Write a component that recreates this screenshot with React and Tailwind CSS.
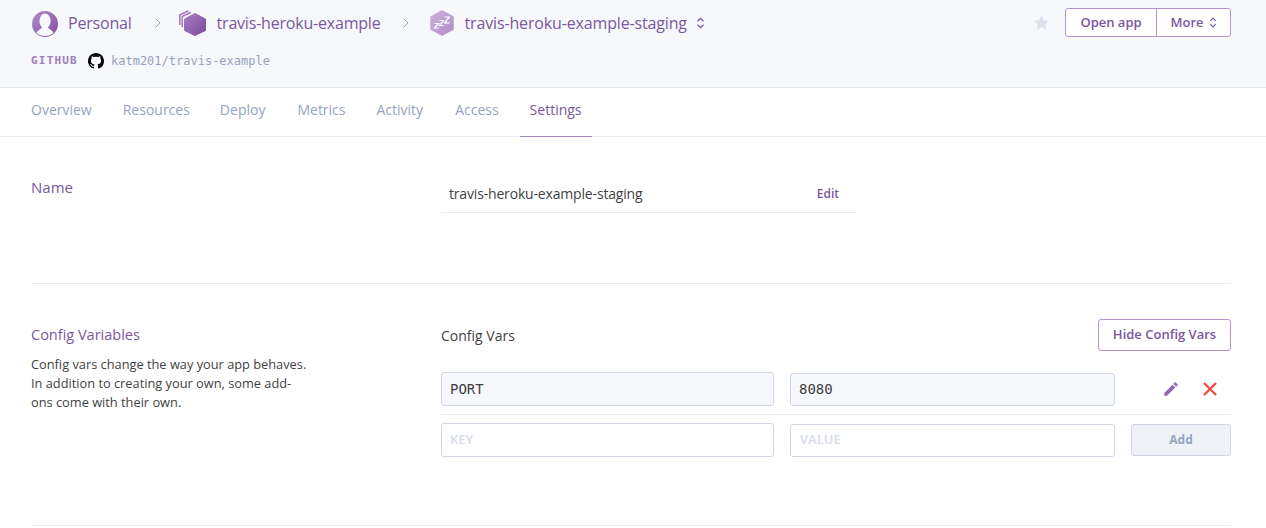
import React from "react";
import { ChevronRight } from "lucide-react";

const sans = "font-['Open_Sans','Noto_Sans',sans-serif]";
const mono = "font-['DejaVu_Sans_Mono',monospace]";

const tabs = [
  { label: "Overview", cls: "mr-[31px]" },
  { label: "Resources", cls: "mr-[30px]" },
  { label: "Deploy", cls: "mr-[32px]" },
  { label: "Metrics", cls: "mr-[31px]" },
  { label: "Activity", cls: "mr-[32px]" },
  { label: "Access", cls: "mr-[21px]" },
];

const UpDown = ({ className }) => (
  <svg viewBox="0 0 10 14" className={className} fill="none" stroke="currentColor" strokeWidth="1.5">
    <path d="M1.5 5 L5 1.5 L8.5 5" />
    <path d="M1.5 9 L5 12.5 L8.5 9" />
  </svg>
);

const PersonIcon = () => (
  <svg viewBox="0 0 26 26" className="w-[26px] h-[26px]">
    <defs>
      <linearGradient id="pg" x1="0" y1="0" x2="1" y2="1">
        <stop offset="0" stopColor="#b48dcc" />
        <stop offset="1" stopColor="#7f4f9f" />
      </linearGradient>
    </defs>
    <circle cx="13" cy="13" r="13" fill="url(#pg)" />
    <g fill="#f7f8fb">
      <ellipse cx="13" cy="10" rx="5.6" ry="7.4" />
      <path d="M4.5 22 C5.5 19 9 18.5 10.5 16 h5 C17 18.5 20.5 19 21.5 22 C19.5 24 16.5 25 13 25 C9.5 25 6.5 24 4.5 22 Z" />
    </g>
  </svg>
);

const AppIcon = () => (
  <svg viewBox="0 0 28 26" className="w-[28px] h-[26px]">
    <defs>
      <linearGradient id="ag" x1="0" y1="0" x2="1" y2="1">
        <stop offset="0" stopColor="#a97fc4" />
        <stop offset="1" stopColor="#7a4a9a" />
      </linearGradient>
    </defs>
    <g fill="none" stroke="#a77dc3" strokeWidth="1.6" strokeLinejoin="round">
      <path d="M0.8 15 V5 L9.5 0.8" />
      <path d="M3.2 17 V6.5 L12 2.2" />
    </g>
    <path d="M16 3.5 L26.5 9 V20.5 L16 25.5 L5.5 20.5 V9 Z" fill="url(#ag)" stroke="url(#ag)" strokeLinejoin="round" />
  </svg>
);

const SleepIcon = () => (
  <svg viewBox="0 0 24 26" className="w-[24px] h-[26px]">
    <defs>
      <linearGradient id="sg" x1="0" y1="0" x2="1" y2="1">
        <stop offset="0" stopColor="#cbb0dc" />
        <stop offset="1" stopColor="#b08dc9" />
      </linearGradient>
    </defs>
    <path d="M12 1 L23 6.9 V19.1 L12 25 L1 19.1 V6.9 Z" fill="url(#sg)" stroke="url(#sg)" strokeWidth="1.5" strokeLinejoin="round" />
    <g fill="none" stroke="#fff" strokeWidth="1.2">
      <path d="M4.5 13.5 h4 L4.5 18 h4.2" />
      <path d="M9.5 10.5 h4 L9.5 15.5 h4.2" />
      <path d="M14.5 7 h5 L14.5 12.8 h5.2" />
    </g>
  </svg>
);

const GithubIcon = () => (
  <svg viewBox="0 0 16 16" className="w-4 h-4" fill="#000">
    <path d="M8 0C3.58 0 0 3.58 0 8c0 3.54 2.29 6.53 5.47 7.59.4.07.55-.17.55-.38 0-.19-.01-.82-.01-1.49-2.01.37-2.53-.49-2.69-.94-.09-.23-.48-.94-.82-1.13-.28-.15-.68-.52-.01-.53.63-.01 1.08.58 1.23.82.72 1.21 1.87.87 2.33.66.07-.52.28-.87.51-1.07-1.78-.2-3.64-.89-3.64-3.95 0-.87.31-1.59.82-2.15-.08-.2-.36-1.02.08-2.12 0 0 .67-.21 2.2.82.64-.18 1.32-.27 2-.27s1.36.09 2 .27c1.53-1.04 2.2-.82 2.2-.82.44 1.1.16 1.92.08 2.12.51.56.82 1.27.82 2.15 0 3.07-1.87 3.75-3.65 3.95.29.25.54.73.54 1.48 0 1.07-.01 1.93-.01 2.2 0 .21.15.46.55.38A8.01 8.01 0 0 0 16 8c0-4.42-3.58-8-8-8z" />
  </svg>
);

const App = () => {
  return (
    <div className={`${sans} w-[1266px] h-[528px] overflow-hidden bg-white`}>
      {/* Header */}
      <div className="bg-[#f7f8fb] h-[88px] border-b border-[#e7eaf1] pl-[31px] pr-[35px] pt-[8px]">
        <div className="flex items-center h-[29px]">
          <div className="ml-[1px] mt-[3px]"><PersonIcon /></div>
          <span className="ml-[10px] text-[16px] tracking-[-0.2px] text-[#79589f]">Personal</span>
          <ChevronRight className="ml-[18px] w-4 h-4 text-[#96a3bf]" strokeWidth={1.5} />
          <div className="ml-[13px]"><AppIcon /></div>
          <span className="ml-[10px] text-[16px] tracking-[-0.2px] text-[#79589f]">travis-heroku-example</span>
          <ChevronRight className="ml-[17px] w-4 h-4 text-[#96a3bf]" strokeWidth={1.5} />
          <div className="ml-[16px]"><SleepIcon /></div>
          <span className="ml-[11px] text-[16px] tracking-[-0.15px] text-[#79589f]">travis-heroku-example-staging</span>
          <UpDown className="ml-[9px] w-[9px] h-[12px] text-[#79589f]" />
          <svg viewBox="0 0 24 24" className="ml-auto w-[17px] h-[17px]" fill="#dfe3ee">
            <path d="M12 1.5l3.2 7.3 7.8.7-5.9 5.2 1.8 7.8L12 18.3l-6.9 4.2 1.8-7.8L1 9.5l7.8-.7z" />
          </svg>
          <div className="ml-[15px] flex h-[29px] bg-white border border-[#b892cc] rounded-[3px] text-[13px] font-semibold text-[#79589f]">
            <div className="w-[91px] flex items-center justify-center border-r border-[#b892cc]">Open app</div>
            <div className="w-[73px] flex items-center justify-center gap-[5px]">
              More
              <UpDown className="w-[8px] h-[11px]" />
            </div>
          </div>
        </div>
        <div className="flex items-center mt-[16px] h-[16px]">
          <span className={`${mono} w-[48px] text-[11px] font-bold tracking-[1.2px] text-[#9a7fb5]`}>GITHUB</span>
          <div className="ml-[9px]"><GithubIcon /></div>
          <span className={`${mono} ml-[7px] text-[12px] text-[#96a3bf]`}>katm201/travis-example</span>
        </div>
      </div>

      {/* Tabs */}
      <div className="h-[49px] border-b border-[#e7eaf1] pl-[31px] flex text-[14px] text-[#96a3bf]">
        {tabs.map((t) => (
          <div key={t.label} className={`${t.cls} pb-[6px] flex items-center`}>{t.label}</div>
        ))}
        <div className="px-[10px] pb-[6px] flex items-center text-[#79589f] h-[49px] border-b border-[#a486bb]">Settings</div>
      </div>

      {/* Name */}
      <div className="ml-[31px] mr-[35px] h-[147px] border-b border-[#e7eaf1] flex">
        <div className="w-[410px] pt-[39px] text-[15px] text-[#79589f]">Name</div>
        <div className="w-[415px] h-[76px] pt-[47px] border-b border-[#e7eaf1] flex justify-between">
          <span className="ml-[8px] text-[14px] tracking-[-0.17px] text-[#3f3f44] leading-[20px]">travis-heroku-example-staging</span>
          <span className="mr-[17px] text-[12px] font-semibold text-[#79589f] leading-[20px]">Edit</span>
        </div>
      </div>

      {/* Config vars */}
      <div className="ml-[31px] mr-[35px] h-[242px] border-b border-[#e7eaf1] flex">
        <div className="w-[410px] pt-[41px]">
          <div className="text-[14.5px] text-[#79589f] leading-[20px]">Config Variables</div>
          <p className="mt-[10px] w-[280px] text-[12.8px] leading-[19px] text-[#3f3f44]">
            Config vars change the way your app behaves. In addition to creating your own, some add-ons come with their own.
          </p>
        </div>
        <div className="flex-1 pt-[35px]">
          <div className="flex items-center justify-between h-[32px]">
            <span className="text-[14px] text-[#3f3f44]">Config Vars</span>
            <button className="w-[133px] h-[32px] bg-white border border-[#b892cc] rounded-[3px] text-[13px] font-semibold text-[#79589f]">
              Hide Config Vars
            </button>
          </div>
          <div className="mt-[21px] pb-[8px] border-b border-[#e7eaf1] flex items-center">
            <div className={`${mono} w-[333px] h-[34px] bg-[#f7f8fb] border border-[#cfd7e6] rounded-[3px] pl-[8px] flex items-center text-[14px] text-[#3f3f44]`}>PORT</div>
            <div className={`${mono} ml-[16px] w-[325px] h-[33px] bg-[#f7f8fb] border border-[#cfd7e6] rounded-[3px] pl-[8px] flex items-center text-[14px] text-[#3f3f44]`}>8080</div>
            <svg viewBox="0 0 24 24" className="ml-[47px] w-[18px] h-[18px]" fill="#9468b5">
              <path d="M3 17.25V21h3.75L17.81 9.94l-3.75-3.75L3 17.25zM20.71 7.04a1 1 0 0 0 0-1.41l-2.34-2.34a1 1 0 0 0-1.41 0l-1.83 1.83 3.75 3.75 1.83-1.83z" />
            </svg>
            <svg viewBox="0 0 16 16" className="ml-[22px] w-[16px] h-[16px]" fill="none" stroke="#f24a4a" strokeWidth="2.4">
              <path d="M2 2 L14 14 M14 2 L2 14" />
            </svg>
          </div>
          <div className="mt-[8px] flex items-center">
            <div className="w-[333px] h-[34px] bg-white border border-[#cfd7e6] rounded-[3px] pl-[8px] flex items-center text-[13px] font-semibold text-[#d5dbe8]">KEY</div>
            <div className="ml-[16px] w-[325px] h-[33px] bg-white border border-[#cfd7e6] rounded-[3px] pl-[9px] flex items-center text-[13px] font-semibold text-[#d5dbe8]">VALUE</div>
            <button className="ml-[16px] w-[100px] h-[32px] bg-[#eef1f6] border border-[#cfd7e6] rounded-[3px] text-[12px] font-bold text-[#96a3bf]">Add</button>
          </div>
        </div>
      </div>
    </div>
  );
};

export default App;
